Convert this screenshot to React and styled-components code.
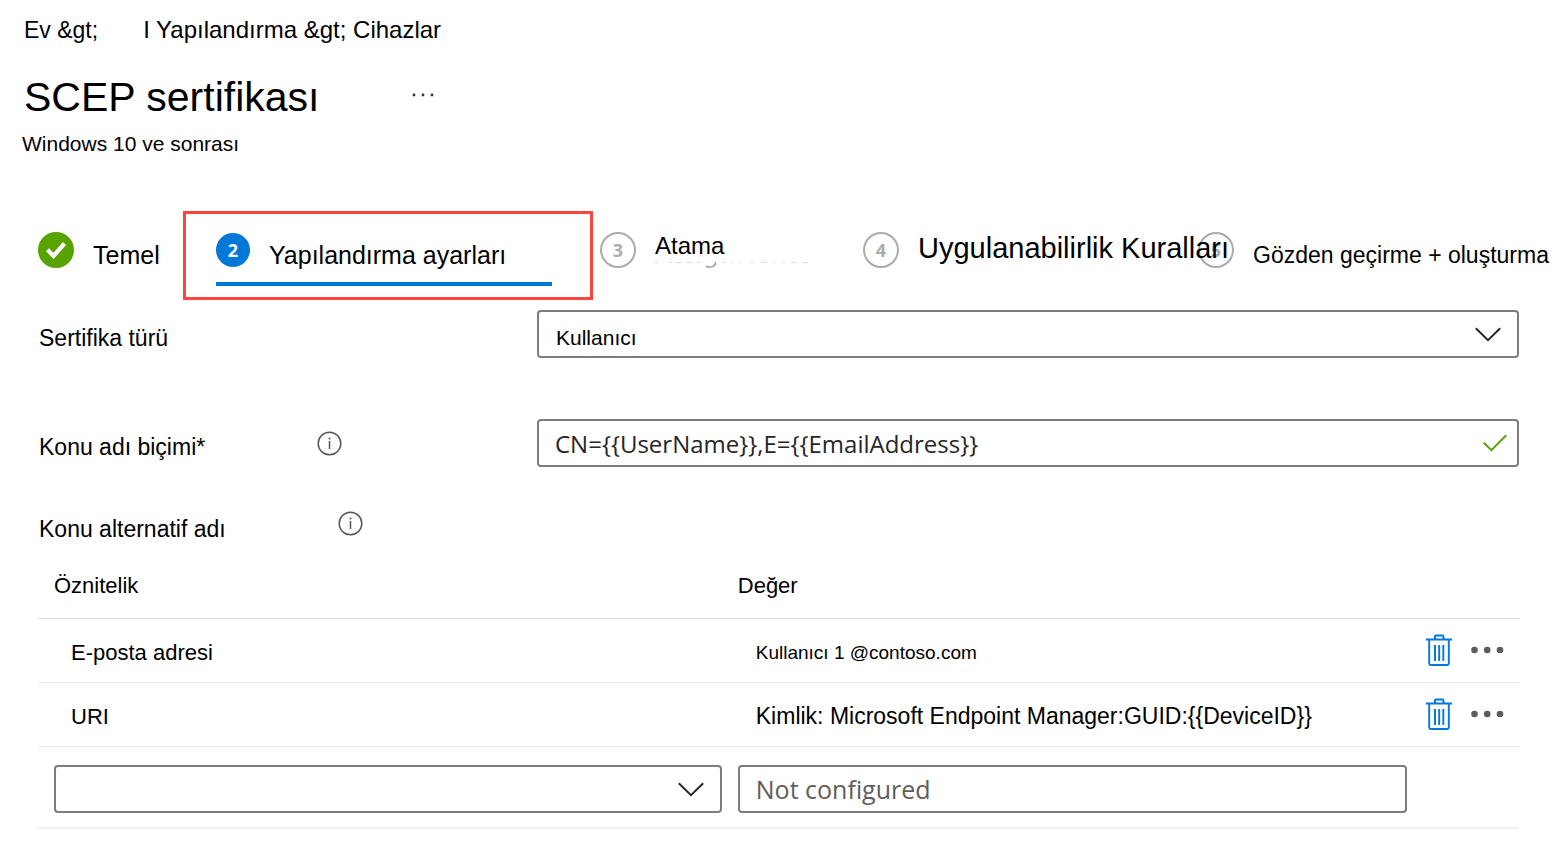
import React, { useState } from 'react';
import styled, { createGlobalStyle } from 'styled-components';

const GlobalStyle = createGlobalStyle`
  * {
    box-sizing: border-box;
  }
  body {
    margin: 0;
    background: #fff;
    color: #000;
    font-family: 'Liberation Sans', Arial, sans-serif;
  }
`;

const Page = styled.main`
  padding-top: 16px;
`;

const Header = styled.header`
  padding-left: 22px;
`;

const Breadcrumb = styled.nav`
  display: flex;
  gap: 45px;
  padding-left: 2px;
  line-height: 28px;
`;

const Crumb = styled.a`
  color: inherit;
  font-size: ${(props) => props.$size || 24}px;
  text-decoration: none;
`;

const TitleRow = styled.div`
  display: flex;
  align-items: center;
  gap: 92px;
  margin-top: 29px;
  padding-left: 2px;
`;

const Title = styled.h1`
  margin: 0;
  font-size: 41px;
  font-weight: 400;
  line-height: 48px;
`;

const Subtitle = styled.p`
  margin: 11px 0 0;
  font-size: 21px;
  line-height: 24px;
`;

const IconButton = styled.button`
  display: flex;
  padding: 0;
  border: 0;
  background: none;
  color: ${(props) => props.$color || '#323130'};
  cursor: pointer;
`;

const Steps = styled.ol`
  display: grid;
  grid-template-columns: 145fr 417fr 263fr 335fr 362fr;
  margin: 55px 0 0;
  padding: 0 0 0 38px;
  list-style: none;
`;

const Step = styled.li`
  min-width: 0;
  padding-top: 21px;
`;

const ActiveStep = styled.li`
  margin-right: 7px;
  padding: 18px 38px 11px 30px;
  border: 3px solid #ff4343;
`;

const StepLink = styled.a`
  display: flex;
  gap: 19px;
  height: ${(props) => (props.$active ? '54px' : '36px')};
  border-bottom: ${(props) => (props.$active ? '4px solid #0078d7' : '0')};
  color: inherit;
  text-decoration: none;
`;

const StepBadge = styled.span`
  display: flex;
  flex: none;
  align-items: center;
  justify-content: center;
  width: ${(props) => (props.$active ? '34px' : '36px')};
  height: ${(props) => (props.$active ? '34px' : '36px')};
  margin-top: ${(props) => (props.$active ? '1px' : '0')};
  border: 2px solid ${(props) => props.$fill || '#ababab'};
  border-radius: 50%;
  background: ${(props) => props.$fill || 'none'};
  color: ${(props) => (props.$fill ? '#fff' : '#ababab')};
  font-family: 'Open Sans', sans-serif;
  font-size: 18px;
  font-weight: 700;
  line-height: 20px;
`;

const StepLabel = styled.span`
  position: relative;
  z-index: 1;
  padding-top: ${(props) => (props.$low ? '9px' : '0')};
  font-size: ${(props) => props.$size || 24}px;
  line-height: ${(props) => (props.$size > 25 ? '32px' : '28px')};
  white-space: nowrap;
`;

const StepText = styled.span`
  display: flex;
  flex: none;
  flex-direction: column;
`;

const Form = styled.form`
  padding: 10px 41px 0 38px;
`;

const FieldRow = styled.div`
  display: grid;
  grid-template-columns: 499fr 982fr;
  align-items: center;
  margin-bottom: 61px;
`;

const LabelGroup = styled.div`
  display: flex;
  align-items: center;
  gap: 112px;
`;

const Label = styled.label`
  padding: 8px 0 0 1px;
  font-size: 23px;
  line-height: 24px;
`;

const SectionLabel = styled.div`
  display: flex;
  align-items: center;
  gap: 112px;
  margin-top: -23px;
`;

const SectionTitle = styled.h2`
  margin: 0;
  padding: 12px 0 0 1px;
  font-size: 23px;
  font-weight: 400;
  line-height: 24px;
`;

const Control = styled.div`
  position: relative;
`;

const ControlIcon = styled.span`
  position: absolute;
  top: 0;
  right: ${(props) => props.$right};
  display: flex;
  align-items: center;
  height: 100%;
  pointer-events: none;
`;

const Select = styled.select`
  display: block;
  width: 100%;
  height: 48px;
  padding: 6px 48px 0 17px;
  border: 2px solid #7f7d7b;
  border-radius: 4px;
  appearance: none;
  background: #fff;
  color: #000;
  font-family: inherit;
  font-size: 21px;
`;

const Input = styled.input`
  display: block;
  width: 100%;
  height: 48px;
  padding: 0 48px 0 16px;
  border: 2px solid #7f7d7b;
  border-radius: 4px;
  background: #fff;
  color: #262626;
  font-family: 'Open Sans', 'Noto Sans', sans-serif;
  font-size: ${(props) => props.$size || 25}px;

  &::placeholder {
    color: #605e5c;
    opacity: 1;
  }
`;

const Table = styled.table`
  width: 100%;
  margin-top: 28px;
  border-collapse: separate;
  border-spacing: 0;
  table-layout: fixed;
`;

const HeadCell = styled.th`
  width: ${(props) => props.$width || 'auto'};
  height: 50px;
  padding: 0 0 16px ${(props) => props.$indent || '0'};
  border-bottom: 1px solid #dedede;
  font-size: 22px;
  font-weight: 400;
  line-height: 28px;
  text-align: left;
`;

const Cell = styled.td`
  height: 64px;
  padding: 4px 0 0 ${(props) => props.$indent};
  border-bottom: 1px solid #ebebeb;
  font-size: ${(props) => props.$size || 22}px;
`;

const ActionCell = styled.td`
  padding: 0 0 2px 19px;
  border-bottom: 1px solid #ebebeb;
`;

const Actions = styled.div`
  display: flex;
  align-items: center;
  gap: 18px;
`;

const ControlCell = styled.td`
  padding: 18px ${(props) => props.$side || '0'} 14px;
  border-bottom: 2px solid #f0f0f0;
`;

const CheckIcon = () => (
  <svg width='24' height='20' viewBox='0 0 24 20' fill='none' aria-hidden='true'>
    <path d='M3.500 9.800l6 6.200L20.500 3.500' stroke='#fff' strokeWidth='4.200' />
  </svg>
);

const Remnant = () => (
  <svg width='156' height='8' viewBox='0 0 156 8' fill='none' aria-hidden='true'>
    <path
      d='M0 2.500h3M14 2.500h3M20 2.500h6M31 2.500h6M42 2.500h3M67 2.500h3M76 2.500h2M85 2.500h2M96 2.500h2M106 2.500h6M118 2.500h2M128 2.500h2M136 2.500h5M147 2.500h6'
      stroke='#dcdcdc'
    />
    <path d='M60.500 2c0 3.500-2.500 5-5.500 5-1.500 0-3-.3-4-.8' stroke='#a0a0a0' strokeWidth='1.600' />
  </svg>
);

const TitleDots = () => (
  <svg width='24' height='8' viewBox='0 0 24 8' fill='currentColor' aria-hidden='true'>
    <circle cx='3' cy='2' r='1.400' />
    <circle cx='12' cy='2' r='1.400' />
    <circle cx='21' cy='2' r='1.400' />
  </svg>
);

const InfoIcon = () => (
  <svg width='25' height='25' viewBox='0 0 25 25' fill='none' aria-hidden='true'>
    <circle cx='12.500' cy='12.500' r='11.300' stroke='#555' strokeWidth='1.500' />
    <path d='M12.500 10v8' stroke='#555' strokeWidth='1.500' />
    <circle cx='12.500' cy='7.500' r='1' fill='#555' />
  </svg>
);

const Chevron = () => (
  <svg width='26' height='15' viewBox='0 0 26 15' fill='none' aria-hidden='true'>
    <path d='M.8 1.200L13 13.200 25.200 1.200' stroke='#252423' strokeWidth='1.900' />
  </svg>
);

const ValidIcon = () => (
  <svg width='24' height='18' viewBox='0 0 24 18' fill='none' aria-hidden='true'>
    <path d='M.8 8.800l7.600 7.400L23.200 1.200' stroke='#57a300' strokeWidth='2' />
  </svg>
);

const TrashIcon = () => (
  <svg width='26' height='32' viewBox='0 0 26 32' fill='none' aria-hidden='true'>
    <path
      d='M0 5.500h26M9 5V2.500q0-1 1-1h6.500q1 0 1 1V5M3.200 5.500V29.500q0 1.500 1.500 1.500h16.600q1.500 0 1.500-1.500V5.500M9 11v16M13.200 11v16M17.300 11v16'
      stroke='currentColor'
      strokeWidth='1.900'
    />
  </svg>
);

const MoreIcon = () => (
  <svg width='34' height='8' viewBox='0 0 34 8' fill='currentColor' aria-hidden='true'>
    <circle cx='4.500' cy='4' r='3.300' />
    <circle cx='17.200' cy='4' r='3.300' />
    <circle cx='30' cy='4' r='3.300' />
  </svg>
);

const rows = [
  { attribute: 'E-posta adresi', value: 'Kullanıcı 1 @contoso.com', size: 19 },
  {
    attribute: 'URI',
    value: 'Kimlik: Microsoft Endpoint Manager:GUID:{{DeviceID}}',
    size: 23,
  },
];

const App = () => {
  const [subject, setSubject] = useState('CN={{UserName}},E={{EmailAddress}}');

  return (
    <Page>
      <GlobalStyle />
      <Header>
        <Breadcrumb>
          <Crumb href='#home' $size={23}>
            Ev &amp;gt;
          </Crumb>
          <Crumb href='#devices'>I Yapılandırma &amp;gt; Cihazlar</Crumb>
        </Breadcrumb>
        <TitleRow>
          <Title>SCEP sertifikası</Title>
          <IconButton type='button'>
            <TitleDots />
          </IconButton>
        </TitleRow>
        <Subtitle>Windows 10 ve sonrası</Subtitle>
      </Header>

      <Steps>
        <Step>
          <StepLink href='#basics'>
            <StepBadge $fill='#57a300'>
              <CheckIcon />
            </StepBadge>
            <StepLabel $low $size={25}>
              Temel
            </StepLabel>
          </StepLink>
        </Step>
        <ActiveStep>
          <StepLink href='#settings' $active>
            <StepBadge $active $fill='#0078d7'>
              2
            </StepBadge>
            <StepLabel $low $size={25}>
              Yapılandırma ayarları
            </StepLabel>
          </StepLink>
        </ActiveStep>
        <Step>
          <StepLink href='#assignments'>
            <StepBadge>3</StepBadge>
            <StepText>
              <StepLabel>Atama</StepLabel>
              <Remnant />
            </StepText>
          </StepLink>
        </Step>
        <Step>
          <StepLink href='#rules'>
            <StepBadge>4</StepBadge>
            <StepLabel $size={29}>Uygulanabilirlik Kuralları</StepLabel>
          </StepLink>
        </Step>
        <Step>
          <StepLink href='#review'>
            <StepBadge>5</StepBadge>
            <StepLabel $low $size={23}>
              Gözden geçirme + oluşturma
            </StepLabel>
          </StepLink>
        </Step>
      </Steps>

      <Form>
        <FieldRow>
          <Label htmlFor='type'>Sertifika türü</Label>
          <Control>
            <Select id='type'>
              <option>Kullanıcı</option>
            </Select>
            <ControlIcon $right='18px'>
              <Chevron />
            </ControlIcon>
          </Control>
        </FieldRow>
        <FieldRow>
          <LabelGroup>
            <Label htmlFor='subject'>Konu adı biçimi*</Label>
            <IconButton type='button'>
              <InfoIcon />
            </IconButton>
          </LabelGroup>
          <Control>
            <Input
              id='subject'
              $size={24}
              value={subject}
              onChange={(e) => setSubject(e.target.value)}
            />
            <ControlIcon $right='12px'>
              <ValidIcon />
            </ControlIcon>
          </Control>
        </FieldRow>

        <SectionLabel>
          <SectionTitle>Konu alternatif adı</SectionTitle>
          <IconButton type='button'>
            <InfoIcon />
          </IconButton>
        </SectionLabel>

        <Table>
          <thead>
            <tr>
              <HeadCell id='attribute' $width='47.25%' $indent='16px'>
                Öznitelik
              </HeadCell>
              <HeadCell id='value'>Değer</HeadCell>
              <HeadCell as='td' $width='112px' />
            </tr>
          </thead>
          <tbody>
            {rows.map((row) => (
              <tr key={row.attribute}>
                <Cell $indent='33px'>{row.attribute}</Cell>
                <Cell $indent='18px' $size={row.size}>
                  {row.value}
                </Cell>
                <ActionCell>
                  <Actions>
                    <IconButton type='button' $color='#0078d7'>
                      <TrashIcon />
                    </IconButton>
                    <IconButton type='button' $color='#5c5c5c'>
                      <MoreIcon />
                    </IconButton>
                  </Actions>
                </ActionCell>
              </tr>
            ))}
            <tr>
              <ControlCell $side='16px'>
                <Control>
                  <Select aria-labelledby='attribute' defaultValue=''>
                    <option value='' />
                  </Select>
                  <ControlIcon $right='18px'>
                    <Chevron />
                  </ControlIcon>
                </Control>
              </ControlCell>
              <ControlCell>
                <Input aria-labelledby='value' placeholder='Not configured' />
              </ControlCell>
              <ControlCell />
            </tr>
          </tbody>
        </Table>
      </Form>
    </Page>
  );
};

export default App;
